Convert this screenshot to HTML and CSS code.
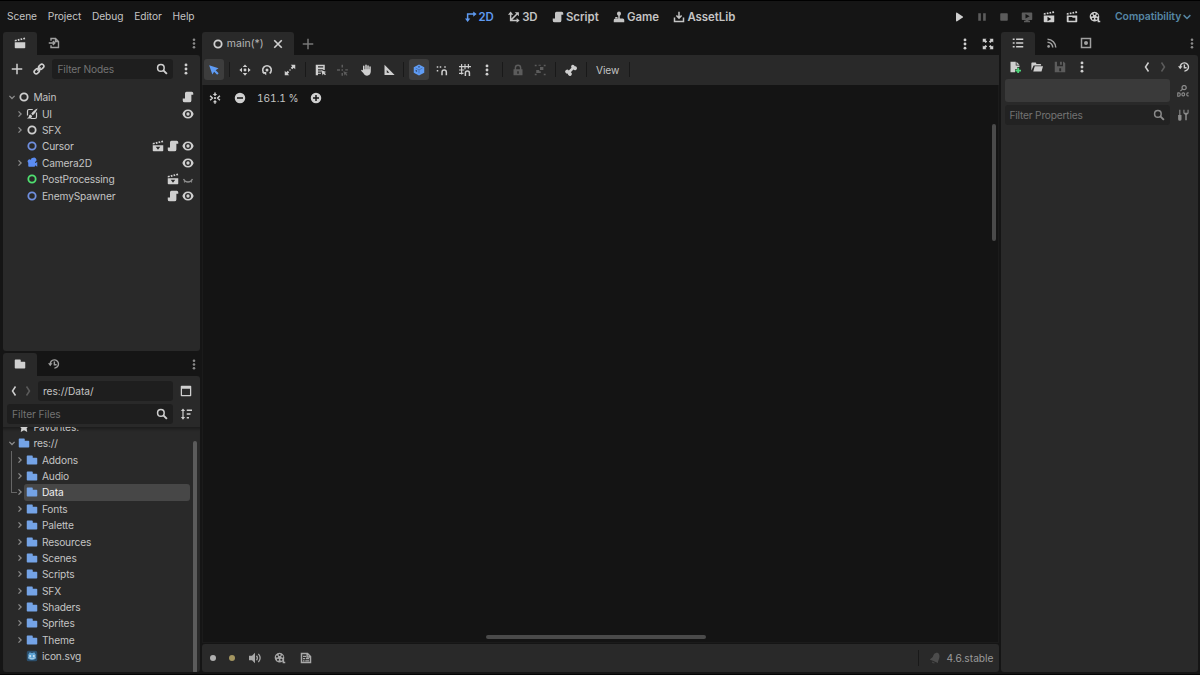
FILE: index.html
```
<!DOCTYPE html>
<html lang="en">
<head>
    <meta charset="UTF-8">
    <meta name="viewport" content="width=device-width, initial-scale=1.0">
    <title>main(*) - Editor</title>
    <link rel="stylesheet" href="styles.css">
</head>
<body>
    <!-- Icon set, 16x16 grid -->
    <svg class="sprite" xmlns="http://www.w3.org/2000/svg">
        <symbol id="node" viewBox="0 0 16 16"><circle cx="8" cy="8" r="4.900" fill="none" stroke="currentColor" stroke-width="2.400"/></symbol>
        <symbol id="down" viewBox="0 0 16 16"><path d="M4.500 6.500 8 10l3.500-3.500" fill="none" stroke="currentColor" stroke-width="1.700"/></symbol>
        <symbol id="chevron" viewBox="0 0 16 16"><path d="M3.500 5.500 8 10l4.500-4.500" fill="none" stroke="currentColor" stroke-width="1.900"/></symbol>
        <symbol id="right" viewBox="0 0 16 16"><path d="M6 4.500 9.500 8 6 11.500" fill="none" stroke="currentColor" stroke-width="1.700"/></symbol>
        <symbol id="prev" viewBox="0 0 16 16"><path d="M10 2 6 8l4 6" fill="none" stroke="currentColor" stroke-width="2"/></symbol>
        <symbol id="next" viewBox="0 0 16 16"><path d="m6 2 4 6-4 6" fill="none" stroke="currentColor" stroke-width="2"/></symbol>
        <symbol id="dots" viewBox="0 0 16 16"><circle cx="8" cy="2.500" r="1.900"/><circle cx="8" cy="8" r="1.900"/><circle cx="8" cy="13.500" r="1.900"/></symbol>
        <symbol id="add" viewBox="0 0 16 16"><path d="M7 1h2v6h6v2H9v6H7V9H1V7h6z"/></symbol>
        <symbol id="close" viewBox="0 0 16 16"><path d="m3 3 10 10M13 3 3 13" stroke="currentColor" stroke-width="2.200"/></symbol>
        <symbol id="clapper" viewBox="0 0 16 16"><path d="M1 7h14v7a1 1 0 0 1-1 1H2a1 1 0 0 1-1-1zM1 4l2.200-.6.800 2L1 6zM4.700 3l2.200-.6.800 2.200-2.200.6zM8.400 2l2.200-.5.700 2.200-2.200.5zM12 1.200l2.400-.6.600 2.300-2.300.5z"/></symbol>
        <symbol id="scene" viewBox="0 0 16 16"><path fill-rule="evenodd" d="M1 7h14v7a1 1 0 0 1-1 1H2a1 1 0 0 1-1-1zM5 9l3 4 3-4zM1 4l2.200-.6.800 2L1 6zM4.700 3l2.200-.6.800 2.200-2.200.6zM8.400 2l2.200-.5.700 2.200-2.200.5zM12 1.200l2.400-.6.600 2.300-2.300.5z"/></symbol>
        <symbol id="playscene" viewBox="0 0 16 16"><path fill-rule="evenodd" d="M1 6h14v8a1 1 0 0 1-1 1H2a1 1 0 0 1-1-1zM6 7.500v6l5-3zM1 3l2.200-.6.600 2.200L1 5zM4.700 2.200l2.200-.5.600 2.200-2.200.5zM8.400 1.500l2.200-.5.500 2.200-2.200.5zM12 .8l2.400-.5.600 2.300-2.300.5z"/></symbol>
        <symbol id="playcustom" viewBox="0 0 16 16"><path fill-rule="evenodd" d="M1 6h14v8a1 1 0 0 1-1 1H2a1 1 0 0 1-1-1zM3.500 8v5h9V9H9L8 8zM1 3l2.200-.6.600 2.200L1 5zM4.700 2.200l2.200-.5.600 2.200-2.200.5zM8.400 1.500l2.200-.5.500 2.200-2.200.5zM12 .8l2.400-.5.600 2.300-2.300.5z"/></symbol>
        <symbol id="import" viewBox="0 0 16 16"><path d="M4 5V2h6l4 4v8H4v-3M10 2v4h4M1 8h8M6.500 5.500 9 8l-2.500 2.500" fill="none" stroke="currentColor" stroke-width="1.900"/></symbol>
        <symbol id="link" viewBox="0 0 16 16"><g fill="none" stroke="currentColor" stroke-width="2.200" transform="rotate(-45 8 8)"><rect x="0" y="5.300" width="7.500" height="5.400" rx="2.700"/><rect x="8.500" y="5.300" width="7.500" height="5.400" rx="2.700"/><path d="M5 8h6"/></g></symbol>
        <symbol id="search" viewBox="0 0 16 16"><path d="m9.500 9.500 5 5" stroke="currentColor" stroke-width="2.500"/><circle cx="6.500" cy="6.500" r="4.400" fill="none" stroke="currentColor" stroke-width="2"/></symbol>
        <symbol id="script" viewBox="0 0 16 16"><path d="M6 1a2 2 0 0 0-2 2v7H1v2.500A2.500 2.500 0 0 0 3.500 15H10a2.500 2.500 0 0 0 2.500-2.500V5H15V3a2 2 0 0 0-2-2z"/></symbol>
        <symbol id="eye" viewBox="0 0 16 16"><path fill-rule="evenodd" d="M8 2C4 2 1.500 4.500.500 8 1.500 11.500 4 14 8 14s6.500-2.500 7.500-6C14.500 4.500 12 2 8 2zm0 2a4 4 0 1 1 0 8 4 4 0 0 1 0-8z"/><circle cx="8" cy="8" r="2.200"/></symbol>
        <symbol id="eyeclosed" viewBox="0 0 16 16"><path d="M2 8c1.500 3 3.500 4 6 4s4.500-1 6-4M4 10.500l-1 2M12 10.500l1 2" fill="none" stroke="currentColor" stroke-width="1.700"/></symbol>
        <symbol id="canvaslayer" viewBox="0 0 16 16"><path d="M9 2H4a2 2 0 0 0-2 2v6M14 6v6a2 2 0 0 1-2 2H6" fill="none" stroke="currentColor" stroke-width="1.600"/><path d="M15.500.500c-3 1-7 4.500-8.500 7l2 2c2.500-2 5.500-6 6.500-9zM6 8.500c-1.500.2-2 1.500-2.200 2.700C3.500 12.500 2.500 13 1 13.500c3 1 7 .5 7-3z"/></symbol>
        <symbol id="camera" viewBox="0 0 16 16"><path d="M9.500 1a3 3 0 0 0-3 2.800A2.500 2.500 0 1 0 3 7.500V12a1 1 0 0 0 1 1h7a1 1 0 0 0 1-1v-1l3 2V6.500l-3 1.500v-1.200A3 3 0 0 0 9.500 1z"/></symbol>
        <symbol id="folder" viewBox="0 0 16 16"><path d="M2 2a1 1 0 0 0-1 1v10a1 1 0 0 0 1 1h12a1 1 0 0 0 1-1V6a1 1 0 0 0-1-1H9V3a1 1 0 0 0-1-1z"/></symbol>
        <symbol id="star" viewBox="0 0 16 16"><path d="m8 1 2.200 4.500 4.800.700-3.500 3.500.800 5L8 12.400l-4.300 2.300.800-5L1 6.200l4.800-.7z"/></symbol>
        <symbol id="history" viewBox="0 0 16 16"><path d="M3 8.500A5.500 5.500 0 1 1 8.500 13.500M8.500 4.500v4.500h3" fill="none" stroke="currentColor" stroke-width="1.900"/><path d="M0 7h6l-3 4z"/></symbol>
        <symbol id="window" viewBox="0 0 16 16"><path fill-rule="evenodd" d="M2 1h12a1 1 0 0 1 1 1v12a1 1 0 0 1-1 1H2a1 1 0 0 1-1-1V2a1 1 0 0 1 1-1zm.700 4v8.300h10.600V5z"/></symbol>
        <symbol id="sort" viewBox="0 0 16 16"><path d="M3.200 4h1.600v8h2L4 15.500 1.200 12h2zM4 .500 6.800 4H1.200zM9 2h7v2H9zM9 7h5v2H9zM9 12h3v2H9z"/></symbol>
        <symbol id="godot" viewBox="0 0 16 16"><rect x="1" y="1" width="14" height="14" rx="2.500" fill="#2c4f6c"/><path d="m3 6 2-3 2 1h2l2-1 2 3v5c-2 3-8 3-10 0z" fill="#5fa3d3"/><g fill="#d5e6f0"><circle cx="5.500" cy="8" r="1.300"/><circle cx="10.500" cy="8" r="1.300"/></g><path d="M3 10.500h3v1h4v-1h3" stroke="#d5e6f0" stroke-width=".8" fill="none"/></symbol>
        <symbol id="axes2d" viewBox="0 0 16 16"><path d="M3.500 11V4H12" fill="none" stroke="currentColor" stroke-width="2"/><path d="M11 .500 15.500 4 11 7.500zM0 10h7l-3.500 4.500z"/></symbol>
        <symbol id="axes3d" viewBox="0 0 16 16"><path d="M3.500 3v9.500H13M3.500 12.500 12 4" fill="none" stroke="currentColor" stroke-width="2"/><path d="M0 5 3.500.500 7 5zM9 1.500h5.500V7zM11.500 9.200l4 3.300-4 3.300z"/></symbol>
        <symbol id="game" viewBox="0 0 16 16"><circle cx="8" cy="3.500" r="2.700"/><path d="M7 5h2v5h4a2 2 0 0 1 2 2v3H1v-3a2 2 0 0 1 2-2h4z"/><path d="M3 8h3v2H3z"/></symbol>
        <symbol id="assetlib" viewBox="0 0 16 16"><path d="M8 1v8M4.500 6 8 9.500 11.500 6M2 8.500V14h12V8.500" fill="none" stroke="currentColor" stroke-width="2"/></symbol>
        <symbol id="play" viewBox="0 0 16 16"><path d="M4 3.200v9.600a1 1 0 0 0 1.500.8l7.500-4.800a1 1 0 0 0 0-1.600L5.500 2.400A1 1 0 0 0 4 3.200z"/></symbol>
        <symbol id="pause" viewBox="0 0 16 16"><path d="M3 3h3.500v10H3zM9.500 3H13v10H9.500z"/></symbol>
        <symbol id="stop" viewBox="0 0 16 16"><rect x="3" y="3" width="10" height="10" rx="1"/></symbol>
        <symbol id="remote" viewBox="0 0 16 16"><path fill-rule="evenodd" d="M2 2h12a1 1 0 0 1 1 1v8a1 1 0 0 1-1 1h-4v1h2v2H4v-2h2v-1H2a1 1 0 0 1-1-1V3a1 1 0 0 1 1-1zm4 2v6l5.500-3z"/></symbol>
        <symbol id="movie" viewBox="0 0 16 16"><path fill-rule="evenodd" d="M7.500 1a6.500 6.500 0 1 0 4 11.600V15H15v-2h-1.500V9A6.500 6.500 0 0 0 7.500 1zm0 1.500a1.400 1.400 0 1 1 0 2.800 1.400 1.400 0 0 1 0-2.800zM4 4.700a1.400 1.400 0 1 1 0 2.800 1.400 1.400 0 0 1 0-2.800zm7 0a1.400 1.400 0 1 1 0 2.800 1.400 1.400 0 0 1 0-2.800zM5.300 9a1.400 1.400 0 1 1 0 2.800 1.400 1.400 0 0 1 0-2.800zm4.500 0a1.400 1.400 0 1 1 0 2.800 1.400 1.400 0 0 1 0-2.800z"/></symbol>
        <symbol id="expand" viewBox="0 0 16 16"><path d="M1 1h5L4.600 2.600l2.300 2.200-2 2-2.300-2.200L1 6zM15 1v5l-1.600-1.400-2.200 2.200-2-2 2.200-2.200L10 1zM1 15v-5l1.600 1.400 2.300-2.200 2 2-2.300 2.200L6 15zM15 15h-5l1.400-1.600-2.200-2.200 2-2 2.200 2.200L15 10z"/></symbol>
        <symbol id="select" viewBox="0 0 16 16"><path d="m1.500 1.500 4.300 12.500 2.400-3.800 4 4 2-2-4-4L14 5.800z"/></symbol>
        <symbol id="move" viewBox="0 0 16 16"><circle cx="8" cy="8" r="1.900"/><path d="M8 .500 11 4H5zM8 15.500 5 12h6zM.500 8 4 5v6zM15.500 8 12 11V5z"/></symbol>
        <symbol id="rotate" viewBox="0 0 16 16"><path d="M4.500 12.500A5.700 5.700 0 1 1 11.500 12.500" fill="none" stroke="currentColor" stroke-width="2.100"/><circle cx="8" cy="8" r="2"/><path d="M1.500 10.500H7V15z"/></symbol>
        <symbol id="scale" viewBox="0 0 16 16"><path d="M9 1h6v6l-2-2-2 2-2-2 2-2zM1 9l2 2 2-2 2 2-2 2 2 2H1z"/><circle cx="8" cy="8" r="1"/></symbol>
        <symbol id="listselect" viewBox="0 0 16 16"><path fill-rule="evenodd" d="M1 1h12v7h-2V7H4v1.500h4V10H4v1.500h4V13H4v2H1zm3 2v1.500h7V3z"/><path d="m8 8 7 2.800-2.400 1 2 2-1.300 1.200-2-2-1 2.300z"/></symbol>
        <symbol id="pivot" viewBox="0 0 16 16"><path d="M6 1h2v3.500H6zM0 7h4v2H0zM6 7h2v2H6zM11 7h3.500v1.500H11zM6 12h2v3.500H6z"/><path d="m8.500 9.500 6 2-2.500 1 2 2-1 1-2-2-.8 2z"/></symbol>
        <symbol id="hand" viewBox="0 0 16 16"><path d="M7 1.500a1 1 0 0 1 2 0V7h.7V2.500a1 1 0 0 1 2 0V7h.7V4a1 1 0 0 1 2 0v6c0 3-2 5.500-5 5.500-2.500 0-3.500-1-5-3.500L1.500 9c0-1.500 1.500-1.500 2.500-.5V3a1 1 0 0 1 2 0v4h1z"/></symbol>
        <symbol id="ruler" viewBox="0 0 16 16"><path fill-rule="evenodd" d="M2 1v13.500h13.500zm3 7 3.500 3.500H5z"/></symbol>
        <symbol id="cube" viewBox="0 0 16 16"><path d="M8 .800 15 4.300v7.400l-7 3.500-7-3.500V4.300z"/><path d="m3.500 5.500 4.500 2.300 4.500-2.300M8 8v4.500" stroke="#3b5c90" stroke-width=".8" fill="none"/><path d="M7 3h2v1.500H7zM3.500 7.500l2 1v2l-2-1z" fill="#334768"/></symbol>
        <symbol id="snap" viewBox="0 0 16 16"><path d="M8 15v-4a2.900 2.900 0 0 1 5.800 0v4" fill="none" stroke="currentColor" stroke-width="2"/><path d="M1 3h2v2H1zM5 3h2v2H5zM1 8h2v2H1zM11 3h2v2h-2z"/></symbol>
        <symbol id="gridsnap" viewBox="0 0 16 16"><path d="M3.500 0v14M8 0v7M12.500 0v6M0 3.500h16M0 8h7M0 12.500h6" stroke="currentColor" stroke-width="1.500"/><path d="M8.500 16v-4a2.700 2.700 0 0 1 5.400 0v4" fill="none" stroke="currentColor" stroke-width="2"/></symbol>
        <symbol id="lock" viewBox="0 0 16 16"><path d="M4.500 8V5a3.500 3.500 0 0 1 7 0v3" fill="none" stroke="currentColor" stroke-width="2"/><path fill-rule="evenodd" d="M2 7h12v8H2zm5 2.500V13h2V9.500z"/></symbol>
        <symbol id="group" viewBox="0 0 16 16"><path d="M1 1h2.500v2H1zM13 1h2.500v2H13zM1 13h2.500v2H1zM13 13h2.500v2H13zM8 4h4.500v4H8zM3 8h4v1.500h2V12H3zM6 1h3v1.200H6z"/></symbol>
        <symbol id="bone" viewBox="0 0 16 16"><path d="M10.500 1a2.500 2.500 0 0 0-1.800 4L5 8.700a2.600 2.600 0 1 0-1 3.800 2.600 2.600 0 1 0 3.700-1.600L11.300 7.200A2.600 2.600 0 1 0 12.900 3 2.500 2.500 0 0 0 10.500 1z"/></symbol>
        <symbol id="center" viewBox="0 0 16 16"><circle cx="8" cy="8" r="1.500"/><path d="M8 5.500 5 2.500h2V.500h2v2h2zM8 10.500l3 3H9v2H7v-2H5z"/><path d="M1.500 5 4.500 8l-3 3M14.500 5l-3 3 3 3" fill="none" stroke="currentColor" stroke-width="2"/></symbol>
        <symbol id="minus" viewBox="0 0 16 16"><path fill-rule="evenodd" d="M8 1a7 7 0 1 0 0 14A7 7 0 0 0 8 1zM4 7h8v2H4z"/></symbol>
        <symbol id="plus" viewBox="0 0 16 16"><path fill-rule="evenodd" d="M8 1a7 7 0 1 0 0 14A7 7 0 0 0 8 1zM7 4h2v3h3v2H9v3H7V9H4V7h3z"/></symbol>
        <symbol id="list" viewBox="0 0 16 16"><path d="M1 2h2.500v2H1zM5.500 2H15v2H5.500zM1 7h2.500v2H1zM5.500 7H15v2H5.500zM1 12h2.500v2H1zM5.500 12H15v2H5.500z"/></symbol>
        <symbol id="signals" viewBox="0 0 16 16"><circle cx="3.500" cy="12.500" r="1.800"/><path d="M2 7a7 7 0 0 1 7 7M2 3a11 11 0 0 1 11 11" fill="none" stroke="currentColor" stroke-width="2"/></symbol>
        <symbol id="groups" viewBox="0 0 16 16"><rect x="2" y="2" width="12" height="12" fill="none" stroke="currentColor" stroke-width="2"/><circle cx="8" cy="8" r="2.700"/></symbol>
        <symbol id="newres" viewBox="0 0 16 16"><path d="M2 1h7v5h5v2h-3v3H8v4H2zM10 1l4 4h-4z"/><path d="M11 9h2.500v2.500H16V14h-2.500v2H11v-2H8.500v-2.500H11z" fill="#4fd67a"/></symbol>
        <symbol id="open" viewBox="0 0 16 16"><path d="M1.500 2a1 1 0 0 0-1 1v9.500L3.500 6h10V5a1 1 0 0 0-1-1H7V3a1 1 0 0 0-1-1zM5 7 3 14h11l2-7z"/></symbol>
        <symbol id="save" viewBox="0 0 16 16"><path fill-rule="evenodd" d="M1 1h3v6h8V1h1l2 2v12H1zM7 9.500v4h2.500v-4z"/><path d="M8 1h2.500v4H8z"/></symbol>
        <symbol id="doc" viewBox="0 0 16 16"><circle cx="9.500" cy="3.500" r="2.800" fill="none" stroke="currentColor" stroke-width="1.700"/><path d="m7.500 5.500-3 2.500M1 10v5h1.500c2.500 0 2.500-4.500 0-4.500H1M15.500 10.500h-1c-2 0-2 4 0 4h1" fill="none" stroke="currentColor" stroke-width="1.500"/><rect x="6.600" y="10.500" width="3.500" height="4" rx="1.500" fill="none" stroke="currentColor" stroke-width="1.500"/></symbol>
        <symbol id="tools" viewBox="0 0 16 16"><path d="M3 1h1.500v7H6v5.500a1.500 1.500 0 0 1-4.500 0V8H3zM8.500 1v4.500L11 8v7h2V8l2.500-2.500V1H14v4h-4V1z"/></symbol>
        <symbol id="speaker" viewBox="0 0 16 16"><path d="M8 1v14L4 11H0V5h4z"/><path d="M10 5c1.500 2 1.500 4 0 6M12.500 2.500c3 3.500 3 7.500 0 11" fill="none" stroke="currentColor" stroke-width="1.700"/></symbol>
        <symbol id="shader" viewBox="0 0 16 16"><path d="M2 2h8l4 4v8H2zM9.500 2v4.500H14" fill="none" stroke="currentColor" stroke-width="2"/><path d="M4 5h4v1.500H4zM4 8h3v1.500H4zM8 8h4v1.500H8zM4 11h2v1.500H4zM7 11h5v1.500H7z"/></symbol>
        <symbol id="bell" viewBox="0 0 16 16"><path d="M11 1c-4 0-5 3-6 5.500L1 10l11 4.500c-.5-3 2-5 2-9C14 3 12.500 1 11 1zM4 12.500l4 2c-2 1.500-4 0-4-2z"/></symbol>
    </svg>

    <div class="editor">
        <header class="topbar">
            <nav class="menu">
                <span>Scene</span><span>Project</span><span>Debug</span><span>Editor</span><span>Help</span>
            </nav>
            <nav class="screens">
                <span class="screen active"><svg class="icon"><use href="#axes2d"/></svg>2D</span>
                <span class="screen"><svg class="icon"><use href="#axes3d"/></svg>3D</span>
                <span class="screen"><svg class="icon"><use href="#script"/></svg>Script</span>
                <span class="screen"><svg class="icon"><use href="#game"/></svg>Game</span>
                <span class="screen"><svg class="icon"><use href="#assetlib"/></svg>AssetLib</span>
            </nav>
            <div class="runbar">
                <svg class="icon"><use href="#play"/></svg>
                <svg class="icon dim"><use href="#pause"/></svg>
                <svg class="icon dim"><use href="#stop"/></svg>
                <svg class="icon dim"><use href="#remote"/></svg>
                <svg class="icon"><use href="#playscene"/></svg>
                <svg class="icon"><use href="#playcustom"/></svg>
                <svg class="icon"><use href="#movie"/></svg>
            </div>
            <div class="renderer">Compatibility<svg class="icon"><use href="#chevron"/></svg></div>
        </header>

        <main class="columns">
            <aside class="side">
                <section class="dock scene-dock">
                    <div class="tabs">
                        <span class="tab active"><svg class="icon"><use href="#clapper"/></svg></span>
                        <span class="tab"><svg class="icon"><use href="#import"/></svg></span>
                        <svg class="icon tab-menu"><use href="#dots"/></svg>
                    </div>
                    <div class="panel">
                        <div class="row-tools">
                            <svg class="icon"><use href="#add"/></svg>
                            <svg class="icon"><use href="#link"/></svg>
                            <div class="field node-filter"><span>Filter Nodes</span><svg class="icon"><use href="#search"/></svg></div>
                            <svg class="icon"><use href="#dots"/></svg>
                        </div>
                        <ul class="tree scene-tree">
                            <li><svg class="icon arrow"><use href="#down"/></svg><svg class="icon"><use href="#node"/></svg><span>Main</span><svg class="icon"><use href="#script"/></svg></li>
                            <li class="child"><svg class="icon arrow"><use href="#right"/></svg><svg class="icon"><use href="#canvaslayer"/></svg><span>UI</span><svg class="icon"><use href="#eye"/></svg></li>
                            <li class="child"><svg class="icon arrow"><use href="#right"/></svg><svg class="icon"><use href="#node"/></svg><span>SFX</span></li>
                            <li class="child"><svg class="icon arrow"></svg><svg class="icon blue"><use href="#node"/></svg><span>Cursor</span><svg class="icon"><use href="#scene"/></svg><svg class="icon"><use href="#script"/></svg><svg class="icon"><use href="#eye"/></svg></li>
                            <li class="child"><svg class="icon arrow"><use href="#right"/></svg><svg class="icon camera"><use href="#camera"/></svg><span>Camera2D</span><svg class="icon"><use href="#eye"/></svg></li>
                            <li class="child"><svg class="icon arrow"></svg><svg class="icon green"><use href="#node"/></svg><span>PostProcessing</span><svg class="icon"><use href="#scene"/></svg><svg class="icon hidden-eye"><use href="#eyeclosed"/></svg></li>
                            <li class="child"><svg class="icon arrow"></svg><svg class="icon blue"><use href="#node"/></svg><span>EnemySpawner</span><svg class="icon"><use href="#script"/></svg><svg class="icon"><use href="#eye"/></svg></li>
                        </ul>
                    </div>
                </section>

                <section class="dock file-dock">
                    <div class="tabs">
                        <span class="tab active"><svg class="icon"><use href="#folder"/></svg></span>
                        <span class="tab"><svg class="icon"><use href="#history"/></svg></span>
                        <svg class="icon tab-menu"><use href="#dots"/></svg>
                    </div>
                    <div class="panel">
                        <div class="row-path">
                            <svg class="icon"><use href="#prev"/></svg>
                            <svg class="icon dim"><use href="#next"/></svg>
                            <div class="field path">res://Data/</div>
                            <svg class="icon"><use href="#window"/></svg>
                        </div>
                        <div class="row-path">
                            <div class="field"><span>Filter Files</span><svg class="icon"><use href="#search"/></svg></div>
                            <svg class="icon"><use href="#sort"/></svg>
                        </div>
                        <div class="files">
                            <ul class="tree file-tree">
                                <li><svg class="icon arrow"></svg><svg class="icon"><use href="#star"/></svg><span>Favorites:</span></li>
                                <li><svg class="icon arrow"><use href="#down"/></svg><svg class="icon folder"><use href="#folder"/></svg><span>res://</span></li>
                                <li class="child"><svg class="icon arrow"><use href="#right"/></svg><svg class="icon folder"><use href="#folder"/></svg><span>Addons</span></li>
                                <li class="child"><svg class="icon arrow"><use href="#right"/></svg><svg class="icon folder"><use href="#folder"/></svg><span>Audio</span></li>
                                <li class="child selected"><svg class="icon arrow"><use href="#right"/></svg><svg class="icon folder"><use href="#folder"/></svg><span>Data</span></li>
                                <li class="child"><svg class="icon arrow"><use href="#right"/></svg><svg class="icon folder"><use href="#folder"/></svg><span>Fonts</span></li>
                                <li class="child"><svg class="icon arrow"><use href="#right"/></svg><svg class="icon folder"><use href="#folder"/></svg><span>Palette</span></li>
                                <li class="child"><svg class="icon arrow"><use href="#right"/></svg><svg class="icon folder"><use href="#folder"/></svg><span>Resources</span></li>
                                <li class="child"><svg class="icon arrow"><use href="#right"/></svg><svg class="icon folder"><use href="#folder"/></svg><span>Scenes</span></li>
                                <li class="child"><svg class="icon arrow"><use href="#right"/></svg><svg class="icon folder"><use href="#folder"/></svg><span>Scripts</span></li>
                                <li class="child"><svg class="icon arrow"><use href="#right"/></svg><svg class="icon folder"><use href="#folder"/></svg><span>SFX</span></li>
                                <li class="child"><svg class="icon arrow"><use href="#right"/></svg><svg class="icon folder"><use href="#folder"/></svg><span>Shaders</span></li>
                                <li class="child"><svg class="icon arrow"><use href="#right"/></svg><svg class="icon folder"><use href="#folder"/></svg><span>Sprites</span></li>
                                <li class="child"><svg class="icon arrow"><use href="#right"/></svg><svg class="icon folder"><use href="#folder"/></svg><span>Theme</span></li>
                                <li class="child"><svg class="icon arrow"></svg><svg class="icon"><use href="#godot"/></svg><span>icon.svg</span></li>
                            </ul>
                            <div class="file-scroll"></div>
                        </div>
                    </div>
                </section>
            </aside>

            <section class="workspace">
                <div class="tabs">
                    <span class="tab active scene-tab"><svg class="icon"><use href="#node"/></svg><span>main(*)</span><svg class="icon close"><use href="#close"/></svg></span>
                    <svg class="icon new-tab"><use href="#add"/></svg>
                    <svg class="icon scene-menu"><use href="#dots"/></svg>
                    <svg class="icon"><use href="#expand"/></svg>
                </div>
                <div class="toolbar">
                    <span class="tool on"><svg class="icon"><use href="#select"/></svg></span>
                    <span class="sep"></span>
                    <span class="tool"><svg class="icon"><use href="#move"/></svg></span>
                    <span class="tool"><svg class="icon"><use href="#rotate"/></svg></span>
                    <span class="tool"><svg class="icon"><use href="#scale"/></svg></span>
                    <span class="sep"></span>
                    <span class="tool"><svg class="icon"><use href="#listselect"/></svg></span>
                    <span class="tool"><svg class="icon dim"><use href="#pivot"/></svg></span>
                    <span class="tool"><svg class="icon"><use href="#hand"/></svg></span>
                    <span class="tool"><svg class="icon"><use href="#ruler"/></svg></span>
                    <span class="sep"></span>
                    <span class="tool on"><svg class="icon"><use href="#cube"/></svg></span>
                    <span class="tool"><svg class="icon"><use href="#snap"/></svg></span>
                    <span class="tool"><svg class="icon"><use href="#gridsnap"/></svg></span>
                    <span class="tool"><svg class="icon"><use href="#dots"/></svg></span>
                    <span class="sep"></span>
                    <span class="tool"><svg class="icon dim"><use href="#lock"/></svg></span>
                    <span class="tool"><svg class="icon dim"><use href="#group"/></svg></span>
                    <span class="sep"></span>
                    <span class="tool"><svg class="icon"><use href="#bone"/></svg></span>
                    <span class="sep"></span>
                    <span class="view">View</span>
                    <span class="sep"></span>
                </div>
                <div class="viewport">
                    <div class="zoom">
                        <svg class="icon"><use href="#center"/></svg>
                        <svg class="icon"><use href="#minus"/></svg>
                        <span>161.1 %</span>
                        <svg class="icon"><use href="#plus"/></svg>
                    </div>
                    <div class="scroll-v"></div>
                    <div class="scroll-h"></div>
                </div>
                <footer class="bottom">
                    <span class="dot"></span>
                    <span class="dot warn"></span>
                    <svg class="icon"><use href="#speaker"/></svg>
                    <svg class="icon"><use href="#movie"/></svg>
                    <svg class="icon"><use href="#shader"/></svg>
                    <div class="version"><svg class="icon"><use href="#bell"/></svg>4.6.stable</div>
                </footer>
            </section>

            <aside class="dock inspector">
                <div class="tabs">
                    <span class="tab active"><svg class="icon"><use href="#list"/></svg></span>
                    <span class="tab"><svg class="icon"><use href="#signals"/></svg></span>
                    <span class="tab"><svg class="icon"><use href="#groups"/></svg></span>
                    <svg class="icon tab-menu"><use href="#dots"/></svg>
                </div>
                <div class="panel">
                    <div class="row-res">
                        <svg class="icon"><use href="#newres"/></svg>
                        <svg class="icon"><use href="#open"/></svg>
                        <svg class="icon dim"><use href="#save"/></svg>
                        <svg class="icon"><use href="#dots"/></svg>
                        <svg class="icon back"><use href="#prev"/></svg>
                        <svg class="icon dim forward"><use href="#next"/></svg>
                        <svg class="icon"><use href="#history"/></svg>
                    </div>
                    <div class="row-prop">
                        <div class="object"></div>
                        <svg class="icon faded"><use href="#doc"/></svg>
                    </div>
                    <div class="row-prop">
                        <div class="field"><span>Filter Properties</span><svg class="icon"><use href="#search"/></svg></div>
                        <svg class="icon faded"><use href="#tools"/></svg>
                    </div>
                </div>
            </aside>
        </main>
    </div>
</body>
</html>
```

FILE: styles.css
```
* {
    box-sizing: border-box;
}

body {
    margin: 0;
    background: #151515;
    color: #c4c4c4;
    font-family: Inter, "Liberation Sans", sans-serif;
    font-size: 10.2px;
    line-height: 16px;
    letter-spacing: -0.05px;
    overflow: hidden;
}

.sprite {
    display: none;
}

.icon {
    width: 12px;
    height: 12px;
    flex: none;
    color: #cfcfcf;
    fill: currentColor;
}

.icon.dim {
    color: #5c5c5c;
}

.editor {
    display: flex;
    flex-direction: column;
    width: 1200px;
    height: 675px;
    border-top: 1px solid #000;
    border-bottom: 1px solid #050505;
}

/* Top bar */
.topbar {
    display: grid;
    grid-template-columns: 457.5px 1fr auto 85px;
    align-items: center;
    height: 31px;
    padding-left: 7px;
}

.menu {
    display: flex;
    gap: 10.7px;
    padding-bottom: 1px;
}

.screens {
    display: flex;
    gap: 14.3px;
}

.screen {
    display: flex;
    align-items: center;
    gap: 2px;
    font-size: 11.4px;
    font-weight: 600;
    letter-spacing: 0;
}

.screen .icon {
    color: inherit;
}

.screen.active {
    color: #5f9af0;
}

.runbar {
    display: flex;
    gap: 10.6px;
    padding-right: 14.5px;
}

.renderer {
    display: flex;
    align-items: center;
    font-size: 10.4px;
    font-weight: 600;
    color: #5687a5;
}

.renderer .icon {
    color: inherit;
}

/* Docks */
.columns {
    display: grid;
    grid-template-columns: 197px 797px 197px;
    gap: 2px;
    height: 640px;
    padding-left: 2.5px;
}

.side {
    display: flex;
    flex-direction: column;
    gap: 2px;
    min-height: 0;
}

.dock {
    display: flex;
    flex-direction: column;
    min-height: 0;
}

.scene-dock {
    height: 319px;
}

.file-dock {
    flex: 1;
}

.tabs {
    display: flex;
    align-items: center;
    height: 23px;
    flex: none;
}

.dock .tab,
.tab-menu {
    padding-bottom: 1px;
}

.tab {
    display: flex;
    align-items: center;
    justify-content: center;
    width: 34px;
    height: 23px;
    border-radius: 3px 3px 0 0;
}

.tab .icon {
    color: #a0a0a0;
}

.tab.active {
    background: #292929;
}

.tab.active .icon {
    color: #d0d0d0;
}

.icon.tab-menu {
    margin-left: auto;
    color: #8a8a8a;
}

.panel {
    flex: 1;
    min-height: 0;
    display: flex;
    flex-direction: column;
    background: #292929;
    border-radius: 0 3px 3px 3px;
}

.field {
    display: flex;
    align-items: center;
    justify-content: space-between;
    flex: 1;
    height: 20px;
    padding: 0 5px;
    border-radius: 3px;
    background: #1e1e1e;
    color: #737373;
}

.row-tools {
    display: flex;
    align-items: center;
    gap: 10.5px;
    height: 28px;
    padding: 0 8px;
}

.node-filter {
    margin-left: -4px;
    margin-right: -3.5px;
    padding-left: 6px;
    letter-spacing: -0.15px;
}

.row-path {
    display: flex;
    align-items: center;
    gap: 7px;
    height: 23px;
    padding: 0 8px 0 4.5px;
}

.row-path:first-child {
    margin-top: 3px;
}

.row-path > .dim {
    margin-left: -5px;
}

.row-path > .icon:first-child {
    margin-left: 1px;
}

.row-path .path {
    color: #c4c4c4;
    margin-left: -3px;
}

/* Trees */
.tree {
    list-style: none;
    margin: 0;
    padding: 0;
    letter-spacing: -0.15px;
}

.scene-tree {
    padding-top: 6px;
}

.tree li {
    display: flex;
    align-items: center;
    gap: 3px;
    height: 16.4px;
    padding: 0 5.5px 0 3px;
}

.tree li.child {
    padding-left: 11.4px;
}

.tree li span {
    flex: 1;
    padding-left: 1px;
}

.tree .arrow {
    margin-right: -3px;
    color: #8c8c8c;
}

.icon.blue {
    color: #6f8fe0;
}

.icon.camera {
    color: #5b8cf2;
}

.icon.green {
    color: #4fe070;
}

.icon.folder {
    color: #74a3e6;
}

.icon.hidden-eye {
    color: #8c8c8c;
}

.files {
    display: flex;
    flex: 1;
    min-height: 0;
    margin-top: 1.5px;
    overflow: hidden;
    box-shadow: inset 0 4px 3px -2px #1c1c1c;
}

.file-tree {
    flex: 1;
    margin-top: -7.9px;
}

.file-scroll {
    width: 4px;
    height: 232px;
    margin: 14px 2.5px 0 0;
    border-radius: 2px;
    background: #5b5b5b;
}

.tree li.selected {
    position: relative;
    color: #f0f0f0;
}

.selected .folder,
.selected .arrow,
.selected span {
    z-index: 1;
}

.selected::before {
    content: "";
    position: absolute;
    left: 21px;
    right: 3px;
    top: 0;
    bottom: 0;
    border-radius: 3px;
    background: #474747;
}

/* Branch line from res:// to the selected folder */
.selected::after {
    content: "";
    position: absolute;
    left: 8px;
    bottom: 8px;
    width: 5px;
    height: 41px;
    border-left: 1px solid #666;
    border-bottom: 1px solid #666;
}

/* Workspace */
.workspace {
    display: flex;
    flex-direction: column;
    min-height: 0;
}

.workspace > .tabs {
    padding-right: 5px;
}

.scene-tab {
    width: 92.5px;
    gap: 3px;
    font-size: 10.5px;
    letter-spacing: 0;
    color: #b5b5b5;
}

.scene-tab .close {
    margin-left: 5px;
    color: #f0f0f0;
}

.icon.new-tab {
    margin-left: 8px;
    color: #777;
}

.scene-menu {
    margin-left: auto;
    margin-right: 11px;
}

.toolbar {
    display: flex;
    align-items: center;
    gap: 2.7px;
    height: 30px;
    flex: none;
    padding: 0 0 1px 2.5px;
    background: #292929;
}

.tool {
    display: flex;
    align-items: center;
    justify-content: center;
    width: 20px;
    height: 21px;
    border-radius: 3px;
}

.tool.on {
    background: #3d3d3d;
}

.tool.on .icon {
    color: #5f9cf5;
}

.sep {
    width: 1px;
    height: 15px;
    margin: 0 2.1px;
    background: #191919;
}

.view {
    padding: 0 4.5px;
    letter-spacing: -0.1px;
}

.viewport {
    position: relative;
    flex: 1;
    background: #141414;
    border: 1px solid #1b1b1b;
    border-top: none;
}

.zoom {
    display: flex;
    align-items: center;
    gap: 11px;
    padding: 5px 6px;
    font-variant-numeric: tabular-nums;
    letter-spacing: -0.05px;
}

.zoom .icon:first-child {
    margin-right: 2.5px;
}

.scroll-v {
    position: absolute;
    right: 2px;
    top: 39px;
    width: 4px;
    height: 117px;
    border-radius: 2px;
    background: #4a4a4a;
}

.scroll-h {
    position: absolute;
    left: 283px;
    bottom: 3.5px;
    width: 220px;
    height: 4px;
    border-radius: 2px;
    background: #4a4a4a;
}

.bottom {
    display: flex;
    align-items: center;
    gap: 13.5px;
    height: 28px;
    flex: none;
    margin-top: 1px;
    padding: 0 5px 0 8px;
    border-radius: 3px;
    background: #292929;
}

.bottom .icon {
    color: #a8a8a8;
}

.dot {
    width: 6px;
    height: 6px;
    border-radius: 50%;
    background: #b0b0b0;
}

.dot.warn {
    background: #a39560;
}

.version {
    display: flex;
    align-items: center;
    gap: 6px;
    height: 16px;
    margin-left: auto;
    padding-left: 10px;
    border-left: 1px solid #191919;
    color: #9a9a9a;
    letter-spacing: 0;
}

.bottom .version .icon {
    color: #4c4c4c;
}

/* Inspector */
.row-res {
    display: flex;
    align-items: center;
    gap: 10.5px;
    height: 23.5px;
    padding: 0 8px;
}

.row-res .back {
    margin-left: auto;
}

.row-res .forward {
    margin-left: -6px;
    margin-right: -2px;
}

.row-prop {
    display: flex;
    align-items: center;
    gap: 7px;
    height: 24.5px;
    padding: 0 8.5px 0 4px;
}

.object {
    flex: 1;
    height: 23px;
    border-radius: 3px;
    background: #3a3a3a;
}

.row-prop .field {
    background: #222;
    letter-spacing: -0.2px;
}

.row-prop .field .icon,
.icon.faded {
    color: #8a8a8a;
}
```
